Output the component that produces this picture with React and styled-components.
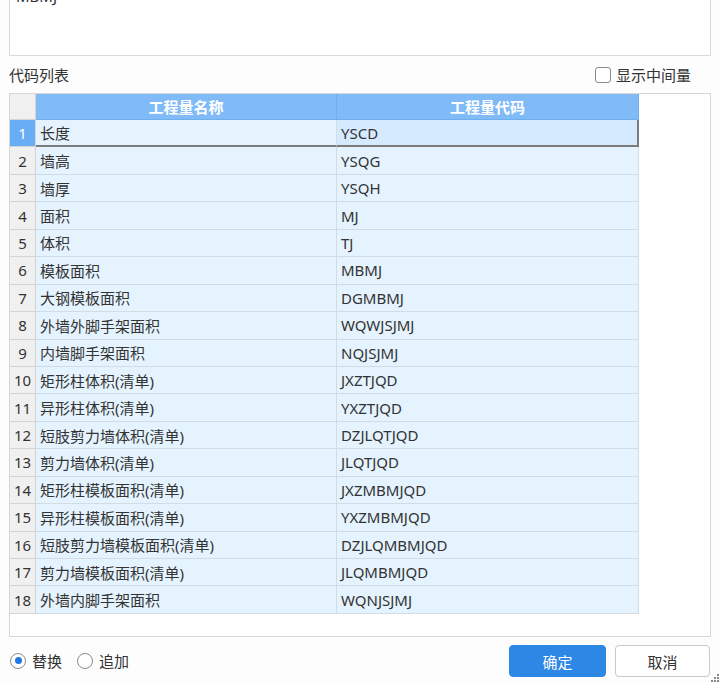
import React from "react";
import styled, { createGlobalStyle } from "styled-components";

const Global = createGlobalStyle`
  html, body { margin: 0; padding: 0; background: #fdfdfd; }
  body { font-family: "Noto Sans", "Noto Sans CJK SC", sans-serif; color: #333; }
  * { box-sizing: border-box; }
`;

const Page = styled.div`
  position: relative;
  width: 720px;
  height: 683px;
  overflow: hidden;
  padding: 0 9px;
  display: flex;
  flex-direction: column;
`;

const TextArea = styled.div`
  height: 56px;
  background: #fff;
  border: 1px solid #dadada;
  border-top: none;
  overflow: hidden;
  padding: 0 6px;
  font-size: 15px;
  line-height: 20px;
`;

const ScrolledLine = styled.div`
  margin-top: -14px;
`;

const LabelRow = styled.div`
  height: 37px;
  display: flex;
  align-items: center;
  justify-content: space-between;
  padding-right: 20px;
  font-size: 15px;
`;

const CheckLabel = styled.label`
  display: flex;
  align-items: center;
  gap: 5px;
`;

const CheckBox = styled.span`
  width: 16px;
  height: 16px;
  border: 1px solid #8a8a8a;
  border-radius: 3px;
  background: #fff;
`;

const TableBox = styled.div`
  height: 544px;
  background: #fff;
  border: 1px solid #d6d6d6;
`;

const Grid = styled.div`
  display: grid;
  grid-template-columns: 26px 301px 302px;
  grid-template-rows: 26px repeat(18, 27.45px);
  font-size: 15px;
`;

const Corner = styled.div`
  background: #f0f0f0;
  border-right: 1px solid #d4d4d4;
  border-bottom: 1px solid #d4d4d4;
`;

const HeadCell = styled.div`
  background: #80bbf8;
  color: #fff;
  font-weight: 700;
  display: flex;
  align-items: center;
  justify-content: center;
  border-right: 1px solid #6faeee;
  border-bottom: 1px solid #6faeee;
  font-family: "Noto Sans CJK SC", sans-serif;
`;

const NumCell = styled.div`
  background: ${(p) => (p.$sel ? "#68aef6" : "#f0f0f0")};
  color: ${(p) => (p.$sel ? "#fff" : "#333")};
  display: flex;
  align-items: center;
  justify-content: center;
  border-right: 1px solid #d4d4d4;
  border-bottom: 1px solid #d4d4d4;
`;

const Cell = styled.div`
  background: ${(p) => (p.$sel && p.$code ? "#d6eaff" : "#e5f3ff")};
  display: flex;
  align-items: center;
  padding-left: 4px;
  white-space: nowrap;
  border-right: ${(p) => (p.$sel && p.$code ? "2px solid #7c7c7c" : "1px solid #d3dbe3")};
  border-bottom: ${(p) => (p.$sel ? "2px solid #7c7c7c" : "1px solid #d3dbe3")};
`;

const Footer = styled.div`
  flex: 1;
  display: flex;
  align-items: center;
  justify-content: space-between;
  padding-top: 8px;
  padding-bottom: 6px;
  font-size: 15px;
`;

const Radios = styled.div`
  display: flex;
  align-items: center;
  gap: 15px;
  padding-left: 1px;
  margin-top: -1px;
`;

const RadioLabel = styled.label`
  display: flex;
  align-items: center;
  gap: 6px;
`;

const RadioCircle = styled.span`
  width: 16px;
  height: 16px;
  border-radius: 50%;
  border: 1px solid #8a8a8a;
  background: #fff;
  display: flex;
  align-items: center;
  justify-content: center;
  &::after {
    content: "";
    width: 7px;
    height: 7px;
    border-radius: 50%;
    background: ${(p) => (p.$on ? "#1f78e0" : "transparent")};
  }
`;

const Buttons = styled.div`
  display: flex;
  gap: 9px;
  padding-right: 1px;
`;

const Button = styled.button`
  width: ${(p) => (p.$primary ? "97px" : "95px")};
  height: 32px;
  border-radius: 4px;
  font-family: "Noto Sans CJK SC", sans-serif;
  font-size: 15px;
  cursor: pointer;
  background: ${(p) => (p.$primary ? "#2c87e5" : "#fff")};
  color: ${(p) => (p.$primary ? "#fff" : "#333")};
  border: 1px solid ${(p) => (p.$primary ? "#2c87e5" : "#c9c9c9")};
`;

const Grip = styled.svg`
  position: absolute;
  right: 0;
  bottom: 0;
`;

const rows = [
  ["长度", "YSCD"],
  ["墙高", "YSQG"],
  ["墙厚", "YSQH"],
  ["面积", "MJ"],
  ["体积", "TJ"],
  ["模板面积", "MBMJ"],
  ["大钢模板面积", "DGMBMJ"],
  ["外墙外脚手架面积", "WQWJSJMJ"],
  ["内墙脚手架面积", "NQJSJMJ"],
  ["矩形柱体积(清单)", "JXZTJQD"],
  ["异形柱体积(清单)", "YXZTJQD"],
  ["短肢剪力墙体积(清单)", "DZJLQTJQD"],
  ["剪力墙体积(清单)", "JLQTJQD"],
  ["矩形柱模板面积(清单)", "JXZMBMJQD"],
  ["异形柱模板面积(清单)", "YXZMBMJQD"],
  ["短肢剪力墙模板面积(清单)", "DZJLQMBMJQD"],
  ["剪力墙模板面积(清单)", "JLQMBMJQD"],
  ["外墙内脚手架面积", "WQNJSJMJ"],
];

export default function App() {
  return (
    <Page>
      <Global />
      <TextArea>
        <ScrolledLine>MBMJ</ScrolledLine>
      </TextArea>
      <LabelRow>
        <span>代码列表</span>
        <CheckLabel>
          <CheckBox />
          <span>显示中间量</span>
        </CheckLabel>
      </LabelRow>
      <TableBox>
        <Grid>
          <Corner />
          <HeadCell>工程量名称</HeadCell>
          <HeadCell>工程量代码</HeadCell>
          {rows.map(([name, code], i) => (
            <React.Fragment key={code}>
              <NumCell $sel={i === 0}>{i + 1}</NumCell>
              <Cell $sel={i === 0}>{name}</Cell>
              <Cell $sel={i === 0} $code>{code}</Cell>
            </React.Fragment>
          ))}
        </Grid>
      </TableBox>
      <Footer>
        <Radios>
          <RadioLabel>
            <RadioCircle $on />
            <span>替换</span>
          </RadioLabel>
          <RadioLabel>
            <RadioCircle />
            <span>追加</span>
          </RadioLabel>
        </Radios>
        <Buttons>
          <Button $primary>确定</Button>
          <Button>取消</Button>
        </Buttons>
      </Footer>
      <Grip width="9" height="10" viewBox="0 0 9 10">
        <rect x="6" y="1" width="2" height="2" fill="#8a8a8a" />
        <rect x="3" y="4" width="2" height="2" fill="#8a8a8a" />
        <rect x="6" y="4" width="2" height="2" fill="#8a8a8a" />
        <rect x="0" y="7" width="2" height="2" fill="#8a8a8a" />
        <rect x="3" y="7" width="2" height="2" fill="#8a8a8a" />
        <rect x="6" y="7" width="2" height="2" fill="#8a8a8a" />
      </Grip>
    </Page>
  );
}
